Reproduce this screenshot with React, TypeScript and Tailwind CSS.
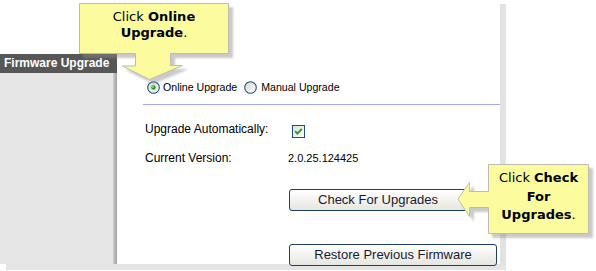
import React from 'react'

function Radio({ checked }: { checked?: boolean }) {
  return (
    <svg width="13" height="13" viewBox="0 0 13 13" className="shrink-0">
      <defs>
        <linearGradient id={checked ? 'rg1' : 'rg2'} x1="0" y1="0" x2="1" y2="1">
          <stop offset="0" stopColor="#d6d6cf" />
          <stop offset="1" stopColor="#ffffff" />
        </linearGradient>
      </defs>
      <circle cx="6.5" cy="6.5" r="5.8" fill={`url(#${checked ? 'rg1' : 'rg2'})`} stroke="#2a5078" strokeWidth="1.1" />
      {checked && (
        <>
          <circle cx="6.5" cy="6.5" r="2.3" fill="#21a121" />
          <circle cx="6" cy="6" r="0.9" fill="#8fe08f" />
        </>
      )}
    </svg>
  )
}

function Checkbox() {
  return (
    <svg width="13" height="13" viewBox="0 0 13 13" className="shrink-0">
      <defs>
        <linearGradient id="cbg" x1="0" y1="0" x2="1" y2="1">
          <stop offset="0" stopColor="#dcdcd7" />
          <stop offset="1" stopColor="#ffffff" />
        </linearGradient>
      </defs>
      <rect x="0.5" y="0.5" width="12" height="12" fill="url(#cbg)" stroke="#1c5180" />
      <path d="M3.2 6.2 L5.4 8.6 L9.8 3.8" fill="none" stroke="#21a121" strokeWidth="1.9" />
    </svg>
  )
}

function Button({ label, width }: { label: string; width: string }) {
  return (
    <button
      className={`${width} h-[22px] rounded-[3px] border border-[#1e3f6c] bg-gradient-to-b from-[#ffffff] to-[#e6e6e0] text-[13px] text-[#1a1a30] leading-[20px] text-center`}
    >
      {label}
    </button>
  )
}

export default function App() {
  return (
    <div className="relative w-[596px] h-[271px] bg-white overflow-hidden font-['Liberation_Sans',Arial,sans-serif] text-black">
      <div className="pt-[4px]">
        {/* screenshot frame */}
        <div className="flex w-[506px] h-[260px] border-r-[6px] border-[#e2e2e2]">
          <div className="flex flex-col w-[117px]">
            <div className="h-[50px] bg-white"></div>
            <div className="h-[19px] bg-[#575757] pl-[4px] text-[12px] leading-[19px] font-bold text-white whitespace-nowrap">
              Firmware Upgrade
            </div>
            <div className="flex flex-1">
              <div className="w-[113px] bg-[#e6e6e6]"></div>
              <div className="w-[4px] bg-gradient-to-r from-[#cfcfcf] to-[#9e9e9e]"></div>
            </div>
          </div>

          <div className="flex-1 bg-white pl-[26px] pt-[77px]">
            <div className="flex items-center h-[13px] ml-[4px] text-[10.6px] whitespace-nowrap">
              <Radio checked />
              <span className="ml-[3px]">Online Upgrade</span>
              <span className="ml-[7px]"><Radio /></span>
              <span className="ml-[4px]">Manual Upgrade</span>
            </div>

            <div className="mt-[10px] h-px bg-[#aaaae2]"></div>

            <div className="flex mt-[14px] h-[20px]">
              <div className="w-[145px] pl-[2px] text-[12px] leading-[20px]">Upgrade Automatically:</div>
              <div className="ml-[4px] mt-[6px]">
                <Checkbox />
              </div>
            </div>

            <div className="flex items-baseline mt-[9px] h-[20px]">
              <div className="w-[145px] pl-[2px] text-[12px] leading-[20px]">Current Version:</div>
              <div className="text-[11px] leading-[20px]">2.0.25.124425</div>
            </div>

            <div className="mt-[19px] ml-[146px]">
              <Button label="Check For Upgrades" width="w-[178px]" />
            </div>
            <div className="mt-[31px] ml-[146px]">
              <Button label="Restore Previous Firmware" width="w-[208px]" />
            </div>
          </div>
        </div>
        <div className="ml-[6px] w-[500px] h-[6px] bg-[#e4e4e4]"></div>
      </div>

      {/* callouts */}
      <svg className="absolute left-0 top-0 pointer-events-none" width="596" height="271">
        <defs>
          <filter id="sh" x="-10%" y="-10%" width="130%" height="140%">
            <feDropShadow dx="4" dy="4" stdDeviation="1.2" floodColor="#8a8a8a" floodOpacity="0.45" />
          </filter>
        </defs>
        <path
          d="M79.5 3.5 H228.5 V53.5 H170.5 V65.5 H182.5 L149.5 79.5 L122.5 66 H135.5 V53.5 H79.5 Z"
          fill="#fcfc9e"
          stroke="#bcbcb0"
          filter="url(#sh)"
        />
        <path
          d="M488.5 164.5 H588.5 V233.5 H488.5 V207.5 H469.5 V216.5 L458 199 L469.5 182.5 V191.5 H488.5 Z"
          fill="#fcfc9e"
          stroke="#bcbcb0"
          filter="url(#sh)"
        />
      </svg>

      <div className="absolute left-[79px] top-[9px] w-[150px] text-center text-[13px] leading-[16px] font-['DejaVu_Sans',Verdana,sans-serif]">
        Click <b>Online</b>
        <br />
        <b>Upgrade</b>.
      </div>
      <div className="absolute left-[488px] top-[169px] w-[101px] text-center text-[13px] leading-[18.5px] font-['DejaVu_Sans',Verdana,sans-serif]">
        Click <b>Check</b>
        <br />
        <b>For</b>
        <br />
        <b>Upgrades</b>.
      </div>
    </div>
  )
}
